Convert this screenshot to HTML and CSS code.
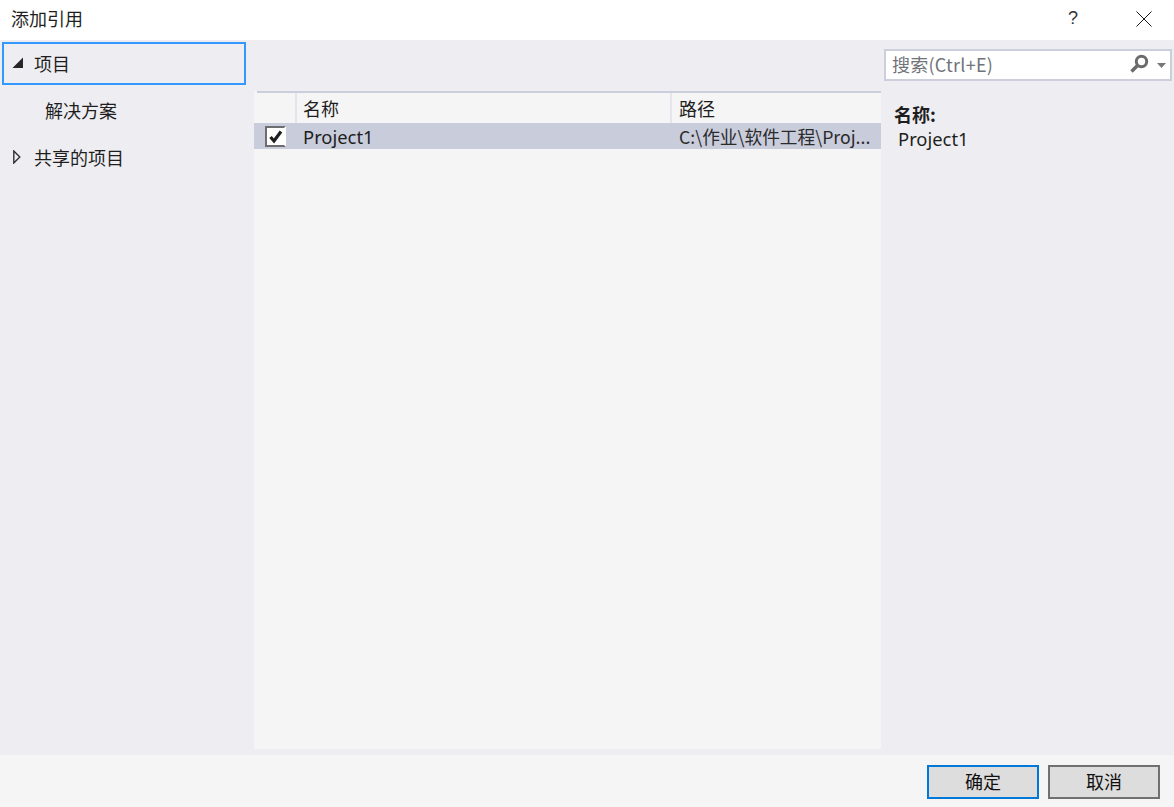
FILE: index.html
```html
<!DOCTYPE html>
<html lang="zh">
<head>
<meta charset="utf-8">
<title>添加引用</title>
<link rel="stylesheet" href="styles.css">
</head>
<body>
<div class="dialog">
  <header class="titlebar">
    <span class="title">添加引用</span>
    <div class="title-actions">
      <span class="help">?</span>
      <svg class="close" width="16" height="16" viewBox="0 0 16 16"><path d="M0.5 0.5L15.5 15.5M15.5 0.5L0.5 15.5" stroke="#1a1a1a" stroke-width="1" fill="none"/></svg>
    </div>
  </header>
  <main class="body">
    <nav class="tree">
      <div class="tree-item selected">
        <svg class="arrow" width="12" height="12" viewBox="0 0 12 12"><path d="M0.5 11L11 11L11 0.5Z" fill="#262626"/></svg>
        <span>项目</span>
      </div>
      <div class="tree-item child"><span>解决方案</span></div>
      <div class="tree-item">
        <svg class="arrow" width="12" height="14" viewBox="0 0 12 14"><path d="M2.8 1L8.8 7L2.8 13Z" fill="none" stroke="#333" stroke-width="1.4"/></svg>
        <span>共享的项目</span>
      </div>
    </nav>
    <section class="center">
      <div class="panel">
        <div class="head">
          <div class="cell c-check"></div>
          <div class="cell c-name">名称</div>
          <div class="cell c-path">路径</div>
        </div>
        <div class="row">
          <div class="c-check">
            <span class="checkbox">
              <svg width="16" height="15" viewBox="0 0 16 15"><path d="M2.5 8L6 12L13 2.5" fill="none" stroke="#1e1e1e" stroke-width="3.2"/></svg>
            </span>
          </div>
          <div class="c-name">Project1</div>
          <div class="c-path">C:\作业\软件工程\Proj...</div>
        </div>
      </div>
    </section>
    <aside class="details">
      <div class="search">
        <span class="placeholder">搜索(Ctrl+E)</span>
        <svg class="mag" width="20" height="20" viewBox="0 0 20 20"><circle cx="12.5" cy="7.5" r="5.2" fill="none" stroke="#6b6b6b" stroke-width="3"/><path d="M8.5 11.5L2.5 17.5" stroke="#6b6b6b" stroke-width="3.6"/></svg>
        <svg class="caret" width="9" height="5" viewBox="0 0 9 5"><path d="M0 0H9L4.5 5Z" fill="#777"/></svg>
      </div>
      <div class="info">
        <div class="info-label">名称:</div>
        <div class="info-value">Project1</div>
      </div>
    </aside>
  </main>
  <footer class="footer">
    <button class="btn primary">确定</button>
    <button class="btn">取消</button>
  </footer>
</div>
</body>
</html>
```
FILE: styles.css
```css
* { box-sizing: border-box; }
html, body { margin: 0; padding: 0; }
body {
  width: 1174px;
  height: 807px;
  overflow: hidden;
  font-family: "Noto Sans CJK SC", "Noto Sans", sans-serif;
  font-size: 18px;
  color: #1e1e1e;
  background: #fff;
}
.dialog { display: flex; flex-direction: column; height: 807px; }
.titlebar {
  height: 40px;
  flex: none;
  display: flex;
  align-items: center;
  justify-content: space-between;
  padding: 0 22px 5px 11px;
  background: #fff;
}
.title { font-size: 18px; line-height: 24px; }
.title-actions { display: flex; align-items: center; gap: 58px; }
.help { font-size: 18px; line-height: 24px; font-family: "Liberation Sans", sans-serif; color: #333; }
.close { display: block; margin-top: 2px; }
.body { flex: 1; display: flex; background: #eeeef2; min-height: 0; }
.tree { width: 254px; flex: none; padding: 2px 8px 0 2px; }
.tree-item {
  height: 47px;
  display: flex;
  align-items: center;
  padding: 0 0 3px 9px;
  gap: 11px;
  font-size: 18px;
}
.tree-item.selected { height: 43px; padding: 0 0 1px 8px; gap: 10px; border: 2px solid #3399ff; margin-bottom: 3px; }
.tree-item.child { padding-left: 43px; }
.arrow { flex: none; }
.center { width: 627px; flex: none; padding: 51px 0 6px; display: flex; }
.panel { flex: 1; background: #f5f5f5; }
.head { height: 32px; margin-left: 3px; display: flex; border-top: 2px solid #cccedb; }
.cell { font-size: 18px; line-height: 30px; border-right: 2px solid #e4e5eb; }
.head .c-check { width: 40px; }
.head .c-name { width: 375px; padding-left: 6px; }
.head .c-path { flex: 1; padding-left: 7px; border-right: 0; }
.row { height: 26px; background: #c9ccdb; display: flex; align-items: center; line-height: 28px; font-size: 18.4px; }
.row .c-check { width: 43px; padding-left: 11px; display: flex; align-items: center; }
.row .c-name { width: 382px; padding: 1px 0 0 6px; font-family: "Noto Sans", sans-serif; }
.row .c-path { flex: 1; white-space: nowrap; overflow: hidden; font-size: 17.7px; line-height: 26px; color: #2b2b2b; }
.checkbox {
  width: 21px;
  height: 21px;
  background: #fff;
  border: 2px solid #6d6d70;
  border-right-color: #fff;
  display: flex;
  align-items: center;
  justify-content: center;
}
.details { flex: 1; padding: 9px 0 0 3px; }
.search {
  height: 32px;
  width: 288px;
  background: #fff;
  border: 2px solid #cccedb;
  display: flex;
  align-items: center;
  padding: 0 0 2px 6px;
}
.placeholder { flex: 1; font-size: 18px; letter-spacing: 0.25px; color: #71737a; }
.mag { flex: none; margin-right: 8px; }
.caret { flex: none; margin-right: 4px; margin-top: 2px; }
.info { padding: 21px 0 0 10px; line-height: 24px; }
.info-label { font-weight: 700; font-size: 18px; line-height: 25px; }
.info-value { padding-left: 4px; font-size: 18.4px; font-family: "Noto Sans", sans-serif; line-height: 24px; }
.footer {
  flex: none;
  height: 52px;
  background: #f5f5f5;
  display: flex;
  justify-content: flex-end;
  gap: 9px;
  padding: 10px 14px 8px 0;
}
.btn {
  width: 112px;
  height: 34px;
  background: #dddddd;
  border: 2px solid #707070;
  font: inherit;
  font-size: 18px;
  line-height: 24px;
  color: #111;
  padding: 0 0 2px 0;
}
.btn.primary { border-color: #0078d7; }
```
